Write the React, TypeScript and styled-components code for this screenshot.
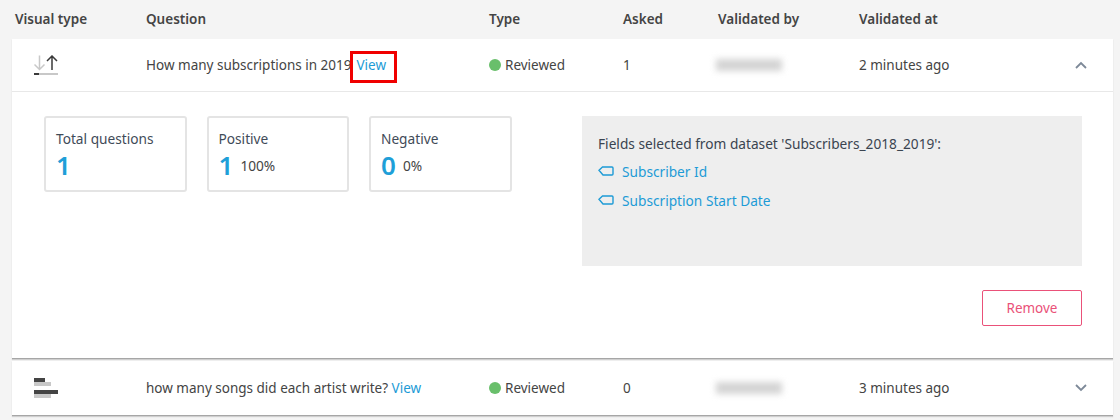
import styled, { createGlobalStyle } from 'styled-components';

const GlobalStyle = createGlobalStyle`
  html, body {
    margin: 0;
    padding: 0;
    background-color: #f4f4f4;
  }
  body {
    font-family: "Noto Sans", "Open Sans", Arial, sans-serif;
    font-size: 13.5px;
    color: #444;
  }
`;

const columns = '134px 343px 134px 95px 141px 200px 1fr';

const Page = styled.div`
  width: 1120px;
  height: 420px;
  overflow: hidden;
  padding: 0 7px 0 12px;
  box-sizing: border-box;
`;

const HeaderRow = styled.div`
  display: grid;
  grid-template-columns: ${columns};
  height: 39px;
  padding-bottom: 2px;
  box-sizing: border-box;
  align-items: center;
  font-weight: 600;
  color: #444;
`;

const HeaderCell = styled.div<{ $inset?: number }>`
  padding-left: ${props => props.$inset || 0}px;
`;

const Card = styled.div`
  background-color: white;
  border-bottom: 1px solid #a6a6a6;
  margin-bottom: 2px;
  box-shadow: 0 1px 1px rgba(0, 0, 0, 0.15);
`;

const Row = styled.div<{ $open?: boolean; $height: number }>`
  display: grid;
  grid-template-columns: ${columns};
  height: ${props => props.$height}px;
  box-sizing: border-box;
  align-items: center;
  border-bottom: ${props => props.$open ? '1px solid #e8e8e8' : 'none'};
`;

const IconCell = styled.div`
  padding-left: 22px;
  display: flex;
  align-items: center;
`;

const View = styled.a`
  color: #1d9bd6;
  text-decoration: none;
`;

const Highlighted = styled(View)`
  position: relative;
  margin-left: 5px;

  &::after {
    content: '';
    position: absolute;
    top: -5px;
    bottom: -9px;
    left: -6px;
    right: -11px;
    border: 3px solid #f00000;
  }
`;

const Status = styled.div`
  display: flex;
  align-items: center;
  gap: 4px;
`;

const Dot = styled.span`
  width: 12px;
  height: 12px;
  border-radius: 50%;
  background-color: #69bf6b;
`;

const Blurred = styled.div`
  width: 66px;
  height: 12px;
  margin-left: -2px;
  background-color: #d4d4d4;
  filter: blur(3px);
`;

const ChevronCell = styled.div`
  display: flex;
  justify-content: flex-end;
  padding-right: 26px;
`;

const Detail = styled.div`
  display: flex;
  flex-direction: column;
  height: 266px;
  padding: 24px 31px 0 32px;
  box-sizing: border-box;
  font-size: 13.7px;
`;

const DetailTop = styled.div`
  display: flex;
  justify-content: space-between;
`;

const Stats = styled.div`
  display: flex;
  gap: 20px;
`;

const Stat = styled.div`
  width: 142.5px;
  height: 76px;
  box-sizing: border-box;
  border: 2px solid #e4e4e4;
  border-radius: 3px;
  padding: 11px 10px;
  color: #3f4b58;
`;

const StatValueRow = styled.div`
  display: flex;
  align-items: center;
  gap: 7px;
  margin-top: 2px;
`;

const StatValue = styled.span`
  font-size: 26px;
  line-height: 30px;
  font-weight: 600;
  color: #1f9fd8;
`;

const Percent = styled.span`
  color: #444;
`;

const Fields = styled.div`
  width: 500px;
  height: 150px;
  box-sizing: border-box;
  background-color: #eeeeee;
  padding: 18px 16px;
  color: #3a4450;
`;

const FieldTitle = styled.div`
  margin-bottom: 9px;
`;

const Field = styled.div`
  display: flex;
  align-items: center;
  gap: 8px;
  height: 18px;
  margin-bottom: 11px;
  color: #1d9bd6;
`;

const Actions = styled.div`
  display: flex;
  justify-content: flex-end;
  margin-top: 24px;
`;

const RemoveButton = styled.button`
  width: 100px;
  height: 36px;
  background-color: white;
  border: 1px solid #ea5179;
  border-radius: 2px;
  color: #ea5179;
  font-family: inherit;
  font-size: 13.5px;
  padding: 0;
`;

const KpiIcon = () => (
  <svg width="24" height="20" viewBox="0 0 24 20" fill="none">
    <path d="M5.5 0.5v14M0.5 9.5l5 5 5-5" stroke="#c8c8c8" strokeWidth="1.5" />
    <path d="M18 15V1M13 6l5-5 5 5" stroke="#3a3a3a" strokeWidth="1.5" />
    <rect x="0" y="18" width="24" height="2" fill="#c8c8c8" />
    <rect x="0" y="18" width="5" height="2" fill="#3a3a3a" />
  </svg>
);

const BarIcon = () => (
  <svg width="24" height="20" viewBox="0 0 24 20">
    <rect x="0" y="0" width="11" height="4" fill="#444" />
    <rect x="0" y="4" width="17" height="4" fill="#c8c8c8" />
    <rect x="0" y="12" width="24" height="4" fill="#444" />
    <rect x="0" y="16" width="17" height="4" fill="#c8c8c8" />
  </svg>
);

const Chevron = ({ up }: { up?: boolean }) => (
  <svg width="12" height="8" viewBox="0 0 12 8" fill="none">
    <path d={up ? 'M1 7l5-5 5 5' : 'M1 1l5 5 5-5'} stroke="#7d8998" strokeWidth="1.8" />
  </svg>
);

const TagIcon = () => (
  <svg width="16" height="10" viewBox="0 0 16 10" fill="none">
    <path d="M4.5 1H14a1 1 0 0 1 1 1v6a1 1 0 0 1-1 1H5L1 4.2z" stroke="#1d9bd6" strokeWidth="1.4" />
  </svg>
);

export default function App() {
  return (
    <Page>
      <GlobalStyle />
      <HeaderRow>
        <HeaderCell $inset={3}>Visual type</HeaderCell>
        <HeaderCell>Question</HeaderCell>
        <HeaderCell>Type</HeaderCell>
        <HeaderCell>Asked</HeaderCell>
        <HeaderCell>Validated by</HeaderCell>
        <HeaderCell>Validated at</HeaderCell>
      </HeaderRow>

      <Card>
        <Row $open $height={53}>
          <IconCell><KpiIcon /></IconCell>
          <div>How many subscriptions in 2019<Highlighted>View</Highlighted></div>
          <Status><Dot />Reviewed</Status>
          <div>1</div>
          <Blurred />
          <div>2 minutes ago</div>
          <ChevronCell><Chevron up /></ChevronCell>
        </Row>
        <Detail>
          <DetailTop>
            <Stats>
              <Stat>
                Total questions
                <StatValueRow><StatValue>1</StatValue></StatValueRow>
              </Stat>
              <Stat>
                Positive
                <StatValueRow><StatValue>1</StatValue><Percent>100%</Percent></StatValueRow>
              </Stat>
              <Stat>
                Negative
                <StatValueRow><StatValue>0</StatValue><Percent>0%</Percent></StatValueRow>
              </Stat>
            </Stats>
            <Fields>
              <FieldTitle>Fields selected from dataset 'Subscribers_2018_2019':</FieldTitle>
              <Field><TagIcon />Subscriber Id</Field>
              <Field><TagIcon />Subscription Start Date</Field>
            </Fields>
          </DetailTop>
          <Actions>
            <RemoveButton>Remove</RemoveButton>
          </Actions>
        </Detail>
      </Card>

      <Card>
        <Row $height={54}>
          <IconCell><BarIcon /></IconCell>
          <div>how many songs did each artist write? <View>View</View></div>
          <Status><Dot />Reviewed</Status>
          <div>0</div>
          <Blurred />
          <div>3 minutes ago</div>
          <ChevronCell><Chevron /></ChevronCell>
        </Row>
      </Card>
    </Page>
  );
}
